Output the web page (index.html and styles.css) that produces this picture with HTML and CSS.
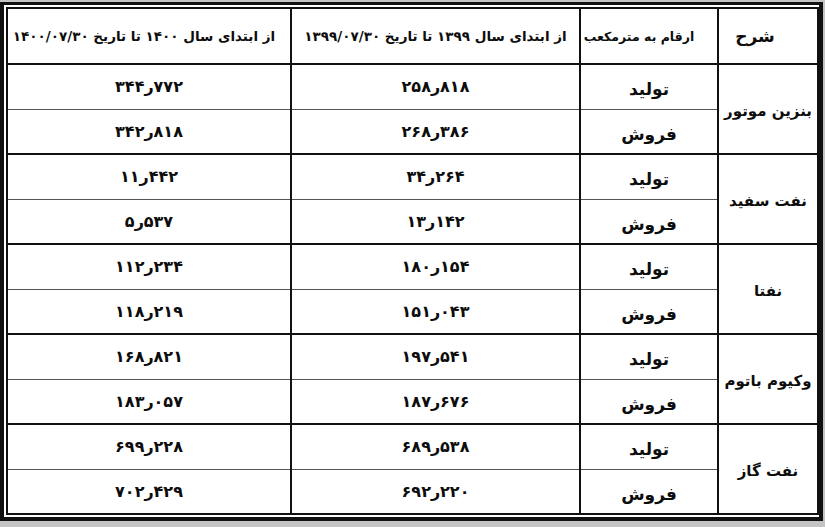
FILE: index.html
```html
<!DOCTYPE html>
<html lang="fa">
<head>
<meta charset="utf-8">
<title>جدول تولید و فروش</title>
<link rel="stylesheet" href="styles.css">
</head>
<body>
<div class="frame">
<table class="report" dir="rtl">
  <colgroup>
    <col class="c-desc">
    <col class="c-unit">
    <col class="c-y1">
    <col class="c-y2">
  </colgroup>
  <thead>
    <tr>
      <th class="h-desc">شرح</th>
      <th class="h-unit">ارقام به مترمکعب</th>
      <th class="h-y1">از ابتدای سال ۱۳۹۹ تا تاریخ ۱۳۹۹/۰۷/۳۰</th>
      <th class="h-y2">از ابتدای سال ۱۴۰۰ تا تاریخ ۱۴۰۰/۰۷/۳۰</th>
    </tr>
  </thead>
  <tbody>
    <tr class="first">
      <td class="desc" rowspan="2">بنزین موتور</td>
      <td class="unit">تولید</td>
      <td class="num"><span class="n">۲۵۸ر۸۱۸</span></td>
      <td class="num"><span class="n">۳۴۴ر۷۷۲</span></td>
    </tr>
    <tr class="second">
      <td class="unit">فروش</td>
      <td class="num"><span class="n">۲۶۸ر۳۸۶</span></td>
      <td class="num"><span class="n">۳۴۲ر۸۱۸</span></td>
    </tr>
    <tr class="first">
      <td class="desc" rowspan="2">نفت سفید</td>
      <td class="unit">تولید</td>
      <td class="num"><span class="n">۳۴ر۲۶۴</span></td>
      <td class="num"><span class="n">۱۱ر۴۴۲</span></td>
    </tr>
    <tr class="second">
      <td class="unit">فروش</td>
      <td class="num"><span class="n">۱۳ر۱۴۲</span></td>
      <td class="num"><span class="n">۵ر۵۳۷</span></td>
    </tr>
    <tr class="first">
      <td class="desc" rowspan="2">نفتا</td>
      <td class="unit">تولید</td>
      <td class="num"><span class="n">۱۸۰ر۱۵۴</span></td>
      <td class="num"><span class="n">۱۱۲ر۲۳۴</span></td>
    </tr>
    <tr class="second">
      <td class="unit">فروش</td>
      <td class="num"><span class="n">۱۵۱ر۰۴۳</span></td>
      <td class="num"><span class="n">۱۱۸ر۲۱۹</span></td>
    </tr>
    <tr class="first">
      <td class="desc" rowspan="2">وکیوم باتوم</td>
      <td class="unit">تولید</td>
      <td class="num"><span class="n">۱۹۷ر۵۴۱</span></td>
      <td class="num"><span class="n">۱۶۸ر۸۲۱</span></td>
    </tr>
    <tr class="second">
      <td class="unit">فروش</td>
      <td class="num"><span class="n">۱۸۷ر۶۷۶</span></td>
      <td class="num"><span class="n">۱۸۳ر۰۵۷</span></td>
    </tr>
    <tr class="first">
      <td class="desc" rowspan="2">نفت گاز</td>
      <td class="unit">تولید</td>
      <td class="num"><span class="n">۶۸۹ر۵۳۸</span></td>
      <td class="num"><span class="n">۶۹۹ر۲۲۸</span></td>
    </tr>
    <tr class="second">
      <td class="unit">فروش</td>
      <td class="num"><span class="n">۶۹۲ر۲۲۰</span></td>
      <td class="num"><span class="n">۷۰۲ر۴۲۹</span></td>
    </tr>
  </tbody>
</table>
</div>
</body>
</html>
```

FILE: styles.css
```css
html, body {
  margin: 0;
  padding: 0;
}

body {
  width: 825px;
  height: 527px;
  background: #c4c4c4;
  font-family: "DejaVu Sans", sans-serif;
  color: #0d0d0d;
  overflow: hidden;
}

.frame {
  box-sizing: border-box;
  width: 823px;
  height: 519px;
  margin-top: 2px;
  background: #fff;
  border-style: solid;
  border-color: #111;
  border-width: 3px 4px 4px 4px;
  padding: 2px;
}

.report {
  width: 811px;
  height: 508px;
  border-collapse: collapse;
  table-layout: fixed;
  border: 2px solid #111;
}

.c-desc { width: 100px; }
.c-unit { width: 138px; }
.c-y1 { width: 289px; }
.c-y2 { width: 284px; }

.report th,
.report td {
  border-left: 2px solid #111;
  border-right: 2px solid #111;
  padding: 0;
  text-align: center;
  vertical-align: middle;
  font-weight: bold;
}

.report th {
  height: 54px;
  font-size: 13.5px;
  border-bottom: 2px solid #111;
}

.report th.h-desc {
  font-size: 17px;
  padding-right: 26px;
}

.report th.h-unit {
  font-size: 12.5px;
  padding-right: 20px;
}

.report th.h-y2 {
  padding-right: 10px;
}

.report td {
  font-size: 16px;
}

.report td.unit {
  font-size: 17px;
  padding-top: 5px;
}

.report td.desc {
  font-size: 15px;
  padding-top: 4px;
}

.report tr.first td {
  border-top: 2px solid #111;
  border-bottom: 1px solid #555;
}

.report tr.second td {
  border-bottom: 2px solid #111;
}

.report .desc {
  border-bottom: 2px solid #111;
}

.n {
  direction: ltr;
  unicode-bidi: bidi-override;
}
```
